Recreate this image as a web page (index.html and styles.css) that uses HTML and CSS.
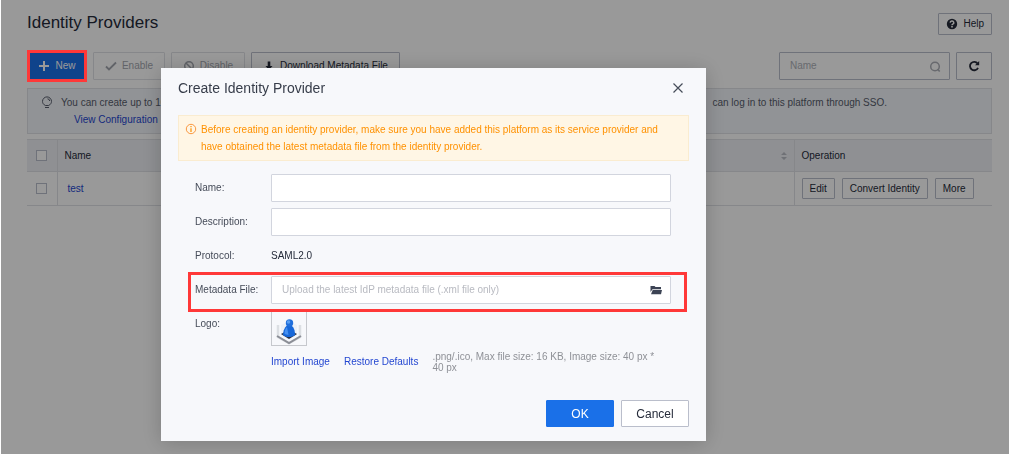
FILE: index.html
```html
<!DOCTYPE html>
<html lang="en">
<head>
<meta charset="utf-8">
<meta name="viewport" content="width=device-width, initial-scale=1">
<title>Identity Providers</title>
<link rel="stylesheet" href="styles.css">
</head>
<body>
<main class="page">
  <header class="page-head">
    <h1 class="page-title">Identity Providers</h1>
    <button class="btn btn-help" type="button">
      <svg class="icon" viewBox="0 0 12 12" aria-hidden="true"><circle cx="6" cy="6" r="5.2" fill="#252b3a"/><path d="M4.2 4.6a1.8 1.6 0 1 1 2.6 1.5c-.5.3-.8.5-.8 1.1" fill="none" stroke="#fff" stroke-width="1.5"/><rect x="5.2" y="8" width="1.6" height="1.5" fill="#fff"/></svg>
      Help
    </button>
  </header>

  <div class="toolbar">
    <button class="btn btn-tool btn-new" type="button">
      <svg class="icon" viewBox="0 0 12 12" aria-hidden="true"><path d="M6 1v10M1 6h10" fill="none" stroke="#fff" stroke-width="2"/></svg>
      New
    </button>
    <button class="btn btn-tool btn-enable" type="button" disabled>
      <svg class="icon" viewBox="0 0 12 12" aria-hidden="true"><path d="M1 6.5l3 3L11 2.500" fill="none" stroke="#a2a6ae" stroke-width="1.8"/></svg>
      Enable
    </button>
    <button class="btn btn-tool btn-disable" type="button" disabled>
      <svg class="icon" viewBox="0 0 12 12" aria-hidden="true"><circle cx="6" cy="6" r="4.300" fill="none" stroke="#a2a6ae" stroke-width="1.500"/><path d="M3 3l6 6" stroke="#a2a6ae" stroke-width="1.500"/></svg>
      Disable
    </button>
    <button class="btn btn-tool btn-download" type="button">
      <svg class="icon" viewBox="0 0 12 12" aria-hidden="true"><path d="M4.700 1.500h2.600V6H9.500L6 10 2.500 6h2.200z" fill="#252b3a"/></svg>
      Download Metadata File
    </button>
    <div class="search">
      <input class="search-input" type="text" placeholder="Name" aria-label="Search by name">
      <svg class="icon" viewBox="0 0 12 12" aria-hidden="true"><circle cx="6" cy="6.500" r="4.300" fill="none" stroke="#adb0b8" stroke-width="1.500"/><path d="M8.500 9l2.200 2.500" stroke="#adb0b8" stroke-width="1.600"/></svg>
    </div>
    <button class="btn btn-tool btn-refresh" type="button" aria-label="Refresh">
      <svg class="icon" viewBox="0 0 12 12" aria-hidden="true"><path d="M9.600 3.600A4.200 4.200 0 1 0 10 7.800" fill="none" stroke="#252b3a" stroke-width="1.800"/><path d="M11.200 1v4.200H7z" fill="#252b3a"/></svg>
    </button>
  </div>

  <section class="notice">
    <svg class="icon notice-icon" viewBox="0 0 12 14" aria-hidden="true"><path d="M4.300 9.500C2.600 8.600 1.500 7.200 1.500 5.400a4.500 4.500 0 0 1 9 0c0 1.800-1.100 3.200-2.800 4.100z" fill="none" stroke="#575d6c"/><path d="M4 11.500h4M6.500 2.800a2.400 2.400 0 0 1 2.200 2.200" fill="none" stroke="#575d6c"/></svg>
    <div class="notice-body">
      <p class="notice-text"><span>You can create up to 10 identity providers.</span><span class="notice-end">can log in to this platform through SSO.</span></p>
      <a class="link notice-link" href="#">View Configuration</a>
    </div>
  </section>

  <table class="table">
    <colgroup><col class="col-check"><col><col class="col-ops"></colgroup>
    <thead>
      <tr>
        <th class="cell-check"><input class="check" type="checkbox" aria-label="Select all"></th>
        <th><div class="th-sort">Name
          <svg class="sort" viewBox="0 0 6 8" aria-hidden="true"><path d="M3 0l3 3H0zM3 8L0 5h6z" fill="#babdc5"/></svg></div></th>
        <th>Operation</th>
      </tr>
    </thead>
    <tbody>
      <tr>
        <td class="cell-check"><input class="check" type="checkbox" aria-label="Select test"></td>
        <td class="cell-name"><a class="link" href="#">test</a></td>
        <td><div class="ops">
          <button class="btn btn-row" type="button">Edit</button>
          <button class="btn btn-row" type="button">Convert Identity</button>
          <button class="btn btn-row" type="button">More</button>
        </div></td>
      </tr>
    </tbody>
  </table>
</main>

<div class="overlay">
  <section class="dialog" role="dialog" aria-labelledby="dialog-title">
    <header class="dialog-head">
      <h2 class="dialog-title" id="dialog-title">Create Identity Provider</h2>
      <button class="close" type="button" aria-label="Close">
        <svg class="close-icon" viewBox="0 0 10 10" aria-hidden="true"><path d="M.5.5l9 9M9.500.5l-9 9" stroke="#464c59" stroke-width="1.200"/></svg>
      </button>
    </header>

    <div class="alert">
      <svg class="alert-icon" viewBox="0 0 12 12" aria-hidden="true"><circle cx="6" cy="6" r="4.700" fill="none" stroke="#fa9841"/><path d="M6 3v1.300M6 5.200V9" stroke="#ff9100" stroke-width="1.200"/></svg>
      <p class="alert-text">Before creating an identity provider, make sure you have added this platform as its service provider and have obtained the latest metadata file from the identity provider.</p>
    </div>

    <form class="form">
      <div class="field">
        <label class="label" for="name">Name:</label>
        <input class="input" id="name" type="text">
      </div>
      <div class="field">
        <label class="label" for="description">Description:</label>
        <input class="input" id="description" type="text">
      </div>
      <div class="field">
        <span class="label">Protocol:</span>
        <span class="value">SAML2.0</span>
      </div>
      <div class="field field-marked">
        <label class="label" for="metadata">Metadata File:</label>
        <div class="file">
          <input class="file-input" id="metadata" type="text" placeholder="Upload the latest IdP metadata file (.xml file only)">
          <button class="file-button" type="button" aria-label="Browse">
            <svg class="icon" viewBox="0 0 12 12" aria-hidden="true"><path d="M.5 2h4l1 1H11v2.300H2.500L.5 8z" fill="#3c4354"/><path d="M2.700 6H12l-1 4.200H1z" fill="#3c4354"/></svg>
          </button>
        </div>
      </div>
      <div class="field field-logo">
        <span class="label">Logo:</span>
        <div class="logo-body">
          <div class="logo-box">
            <svg class="logo" viewBox="0 0 26 28" role="img" aria-label="Logo">
              <path d="M2 8v12l11 6 11-6V8" fill="none" stroke="#dcdfe3" stroke-width="2.500"/>
              <path d="M1 19l12 7 12-7" fill="none" stroke="#8b8e96" stroke-width="2"/>
              <path d="M5 8l8-4 8 4v10l-8 5-8-5z" fill="#edf1f7"/>
              <path d="M5 17l8-4 8 4-8 5z" fill="#252d42"/>
              <path d="M12 8c-3 1-5 6-5 10 2 2.500 9 3 12 0 0-4-1-9-5-10z" fill="#1767d8"/>
              <path d="M11 10c-2 2-2.500 4-2.500 7l4 1z" fill="#4590f2"/>
              <circle cx="13.500" cy="6" r="3.700" fill="#206fdc"/><circle cx="12.500" cy="5" r="1.800" fill="#5a9ff2"/>
            </svg>
          </div>
          <div class="logo-actions">
            <a class="link" href="#">Import Image</a>
            <a class="link" href="#">Restore Defaults</a>
            <p class="hint">.png/.ico, Max file size: 16 KB, Image size: 40 px * 40 px</p>
          </div>
        </div>
      </div>
    </form>

    <footer class="dialog-foot">
      <button class="btn btn-dialog btn-ok" type="button">OK</button>
      <button class="btn btn-dialog" type="button">Cancel</button>
    </footer>
  </section>
</div>
</body>
</html>
```
FILE: styles.css
```css
* { box-sizing: border-box; }

body {
  margin: 0;
  min-height: 100vh;
  background: #fff;
  color: #252b3a;
  font: 10px/16px "Liberation Sans", Arial, sans-serif;
  overflow: hidden;
}

h1, h2, p { margin: 0; font-weight: 400; }
button, input { font: inherit; color: inherit; }

.link { color: #2447d1; text-decoration: none; }
.icon { width: 12px; height: 12px; flex: none; }

.page { padding: 13px 17px 0 27px; }

.page-head { display: flex; justify-content: space-between; }
.page-title { font-size: 17px; line-height: 20px; }

.btn {
  display: inline-flex;
  align-items: center;
  justify-content: center;
  padding: 0 8px;
  border: 1px solid #babecb;
  border-radius: 1px;
  background: #fff;
  white-space: nowrap;
}
.btn-help { height: 22px; padding: 0 7px; gap: 5px; }

.toolbar { display: flex; gap: 6px; margin-top: 17px; }
.btn-tool { height: 28px; gap: 5px; }
.btn-new {
  position: relative;
  width: 60px;
  background: #1a70e8;
  border-color: #1a70e8;
  color: #fff;
}
.btn-new::after {
  content: "";
  position: absolute;
  inset: -3px -1px;
  z-index: 2;
  border: 3px solid #ff3838;
}
.btn-enable, .btn-disable { border-color: #dfe1e6; color: #a2a6ae; }
.btn-enable { width: 72px; }
.btn-disable { width: 74px; }
.btn-download { width: 149px; }
.btn-refresh { width: 36px; }

.search {
  display: flex;
  align-items: center;
  width: 171px;
  margin-left: auto;
  padding: 0 8px;
  border: 1px solid #babecb;
  border-radius: 1px;
}
.search-input { flex: 1; min-width: 0; padding: 0 2px; border: 0; outline: 0; background: none; }
.search-input::placeholder { color: #adb0b8; }

.notice {
  display: flex;
  gap: 8px;
  margin-top: 8px;
  padding: 5px 12px 5px 13px;
  border: 1px solid #dfe1e6;
  background: #f2f5fa;
  color: #575d6c;
  line-height: 17px;
}
.notice-icon { height: 14px; margin-top: 2px; }
.notice-body { flex: 1; }
.notice-text { display: flex; justify-content: space-between; }
.notice-end { padding-right: 92px; }
.notice-link { margin-left: 13px; }

.table { width: 100%; margin-top: 5px; border-collapse: collapse; table-layout: fixed; }
.col-check { width: 30px; }
.col-ops { width: 198px; }
.table th, .table td {
  height: 34px;
  padding: 0 7px;
  border-bottom: 1px solid #dfe1e6;
  text-align: left;
  font-weight: 400;
}
.table th { height: 32px; border-top: 1px solid #dfe1e6; background: #eef0f5; }
.table th + th, .table td + td { border-left: 1px solid #dfe1e6; }
.table .cell-check { padding: 0 0 0 9px; }
.table .cell-name { padding-left: 10px; }
.th-sort { display: flex; align-items: center; justify-content: space-between; }
.sort { width: 6px; height: 8px; }
.check {
  display: block;
  appearance: none;
  width: 11px;
  height: 11px;
  margin: 0;
  border: 1px solid #babecb;
  background: #fff;
}
.ops { display: flex; gap: 7px; }
.btn-row { height: 21px; padding: 0 7px; }

.overlay {
  position: fixed;
  inset: 0 0 0 1px;
  z-index: 1;
  display: flex;
  justify-content: center;
  align-items: flex-start;
  padding: 68px 143px 0 0;
  background: rgba(0, 0, 0, 0.4);
}
.dialog {
  width: 545px;
  max-width: 100%;
  padding: 9px 17px 14px;
  background: #f7f8fb;
  box-shadow: 0 2px 20px rgba(0, 0, 0, 0.2);
}
.dialog-head { display: flex; justify-content: space-between; align-items: center; }
.dialog-title { color: #373d4a; font-size: 14px; line-height: 20px; }
.close { display: flex; padding: 6px; border: 0; background: none; }
.close-icon { width: 10px; height: 10px; }

.alert {
  display: flex;
  gap: 4px;
  margin-top: 16px;
  padding: 5px 6px;
  border: 1px solid #faecd0;
  background: #fff6e5;
  color: #ff9100;
  line-height: 17px;
}
.alert-icon { flex: none; width: 12px; height: 12px; margin-top: 2px; }

.form { display: grid; gap: 6px; padding: 13px 18px 0 17px; }
.field { display: flex; align-items: center; min-height: 28px; }
.label { flex: none; width: 76px; color: #464c59; }
.input, .file {
  flex: 1;
  min-width: 0;
  height: 28px;
  border: 1px solid #d2d5de;
  border-radius: 1px;
  background: #fff;
}
.input { padding: 0 10px; }
.file { display: flex; align-items: center; }
.file-input { flex: 1; min-width: 0; padding: 0 10px; border: 0; outline: 0; background: none; }
.file-input::placeholder { color: #b8bac1; }
.file-button { display: flex; padding: 0 8px; border: 0; background: none; }

.field-marked { position: relative; }
.field-marked::after {
  content: "";
  position: absolute;
  inset: -4px -16px -8px -7px;
  border: 3px solid #ff3838;
  pointer-events: none;
}

.field-logo { align-items: flex-start; }
.field-logo .label { line-height: 28px; }
.logo-body { flex: 1; }
.logo-box {
  display: flex;
  align-items: flex-end;
  justify-content: center;
  width: 36px;
  height: 36px;
  border: 1px solid #c6c8cd;
}
.logo { width: 26px; height: 28px; }
.logo-actions { display: flex; align-items: center; gap: 14px; margin-top: 5px; white-space: nowrap; }
.hint { padding-right: 8px; white-space: normal; color: #8f9197; line-height: 11px; }

.dialog-foot { display: flex; justify-content: flex-end; gap: 7px; margin-top: 27px; }
.btn-dialog { width: 68px; height: 27px; font-size: 12px; }
.btn-ok { background: #1a70e8; border-color: #1a70e8; color: #fff; }
```
